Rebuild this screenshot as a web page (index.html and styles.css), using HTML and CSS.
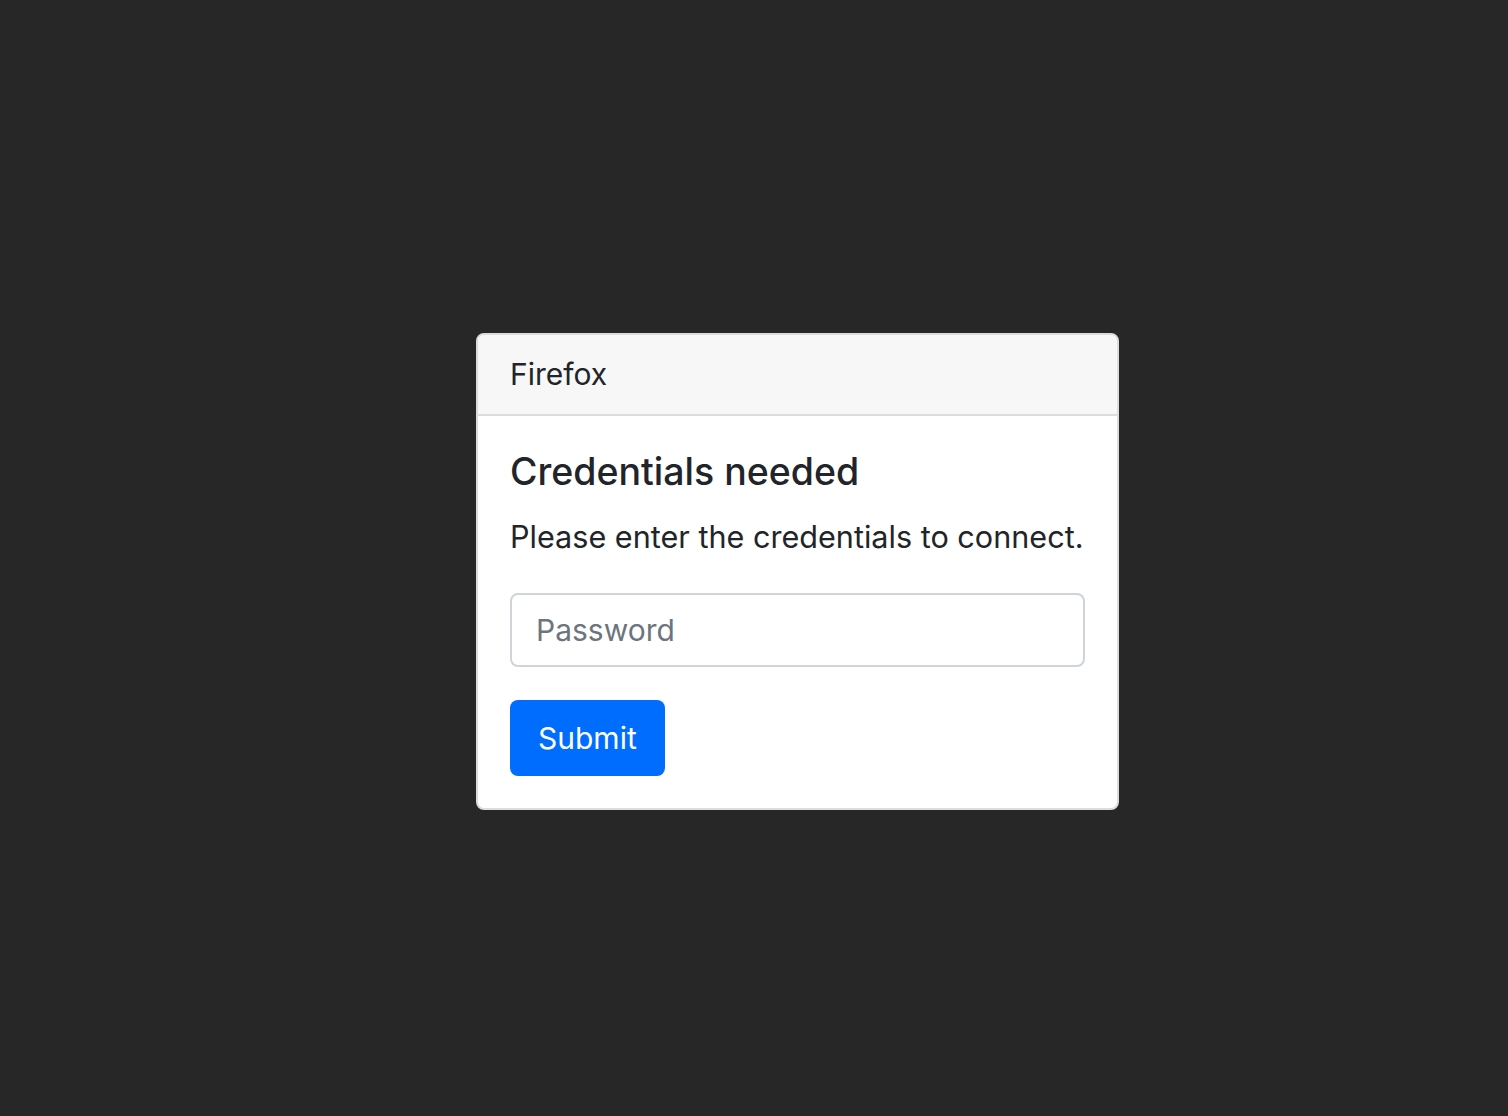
FILE: index.html
```html
<!DOCTYPE html>
<html lang="en">
    <head>
        <meta charset="UTF-8">
        <meta name="viewport" content="width=device-width, initial-scale=1.0">
        <title>Credentials needed</title>
        <link rel="stylesheet" href="styles.css">
    </head>
    <body>
        <div class="card">
            <div class="card-header">Firefox</div>
            <div class="card-body">
                <h5 class="card-title">Credentials needed</h5>
                <p class="card-text">Please enter the credentials to connect.</p>
                <form id="credentials-form">
                    <input type="password" class="form-control" id="password" name="password" placeholder="Password">
                    <button type="submit" class="btn-primary">Submit</button>
                </form>
            </div>
        </div>
    </body>
</html>
```

FILE: styles.css
```css
* {
    box-sizing: border-box;
}
body {
    font-family: Inter, "Liberation Sans", Arial, sans-serif;
    color: #212529;
    margin: 0;
    padding: 26px 0 0 87px;
    display: flex;
    justify-content: center;
    align-items: center;
    height: 100vh;
    background-color: #272727;
}
.card {
    width: 643px;
    background-color: white;
    border: 2px solid #dcdcdc;
    border-radius: 8px;
    overflow: hidden;
}
.card-header {
    height: 81px;
    display: flex;
    align-items: center;
    padding: 0 32px;
    font-size: 30px;
    background-color: #f7f7f7;
    border-bottom: 2px solid #dcdcdc;
}
.card-body {
    padding: 32px;
}
.card-title {
    margin: 0 0 18px;
    font-size: 37.5px;
    font-weight: 500;
    line-height: 48px;
}
.card-text {
    margin: 0 0 34px;
    font-size: 30.6px;
    line-height: 45px;
    white-space: nowrap;
}
form {
    display: flex;
    flex-direction: column;
    align-items: flex-start;
    gap: 33px;
}
.form-control {
    width: 100%;
    height: 74px;
    padding: 0 24px;
    font-family: inherit;
    font-size: 30px;
    color: #495057;
    border: 2px solid #ced4da;
    border-radius: 8px;
    outline: none;
}
.form-control::placeholder {
    color: #6c757d;
}
.btn-primary {
    height: 76px;
    padding: 0 28px;
    font-family: inherit;
    font-size: 30px;
    color: white;
    background-color: #006dff;
    border: none;
    border-radius: 8px;
    cursor: pointer;
}
```
